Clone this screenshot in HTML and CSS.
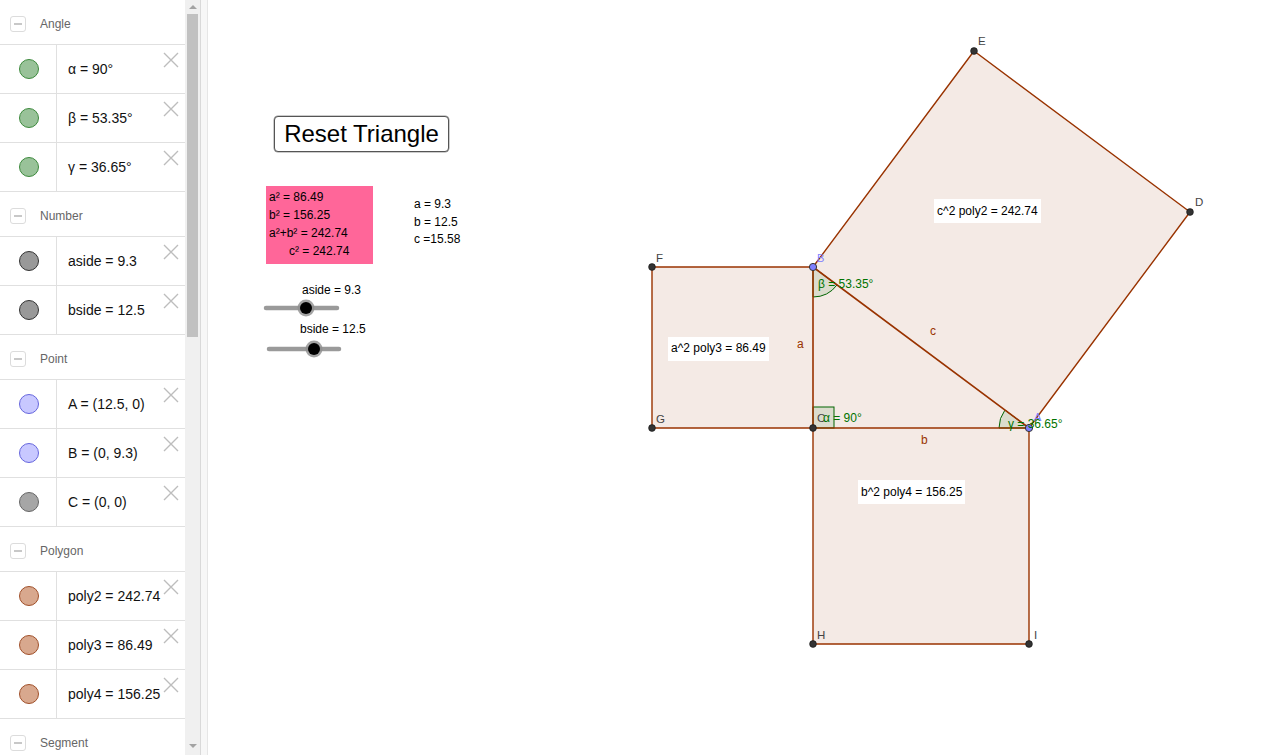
FILE: index.html
```html
<!DOCTYPE html>
<html>
<head>
<meta charset="utf-8">
<title>Pythagoras</title>
<link rel="stylesheet" href="styles.css">
</head>
<body>
<div class="app">
  <aside class="algebra">
    <div class="list">
      <div class="ghead"><span class="toggle"></span><span class="gname">Angle</span></div>
      <div class="item"><div class="mark"><span class="dot dot-angle"></span></div><div class="expr">α = 90°</div><svg class="del" viewBox="0 0 16 16"><path d="M1 1L15 15M15 1L1 15"/></svg></div>
      <div class="item"><div class="mark"><span class="dot dot-angle"></span></div><div class="expr">β = 53.35°</div><svg class="del" viewBox="0 0 16 16"><path d="M1 1L15 15M15 1L1 15"/></svg></div>
      <div class="item"><div class="mark"><span class="dot dot-angle"></span></div><div class="expr">γ = 36.65°</div><svg class="del" viewBox="0 0 16 16"><path d="M1 1L15 15M15 1L1 15"/></svg></div>

      <div class="ghead"><span class="toggle"></span><span class="gname">Number</span></div>
      <div class="item"><div class="mark"><span class="dot dot-num"></span></div><div class="expr">aside = 9.3</div><svg class="del" viewBox="0 0 16 16"><path d="M1 1L15 15M15 1L1 15"/></svg></div>
      <div class="item"><div class="mark"><span class="dot dot-num"></span></div><div class="expr">bside = 12.5</div><svg class="del" viewBox="0 0 16 16"><path d="M1 1L15 15M15 1L1 15"/></svg></div>

      <div class="ghead"><span class="toggle"></span><span class="gname">Point</span></div>
      <div class="item"><div class="mark"><span class="dot dot-free"></span></div><div class="expr">A = (12.5, 0)</div><svg class="del" viewBox="0 0 16 16"><path d="M1 1L15 15M15 1L1 15"/></svg></div>
      <div class="item"><div class="mark"><span class="dot dot-free"></span></div><div class="expr">B = (0, 9.3)</div><svg class="del" viewBox="0 0 16 16"><path d="M1 1L15 15M15 1L1 15"/></svg></div>
      <div class="item"><div class="mark"><span class="dot dot-fixed"></span></div><div class="expr">C = (0, 0)</div><svg class="del" viewBox="0 0 16 16"><path d="M1 1L15 15M15 1L1 15"/></svg></div>

      <div class="ghead"><span class="toggle"></span><span class="gname">Polygon</span></div>
      <div class="item"><div class="mark"><span class="dot dot-poly"></span></div><div class="expr">poly2 = 242.74</div><svg class="del" viewBox="0 0 16 16"><path d="M1 1L15 15M15 1L1 15"/></svg></div>
      <div class="item"><div class="mark"><span class="dot dot-poly"></span></div><div class="expr">poly3 = 86.49</div><svg class="del" viewBox="0 0 16 16"><path d="M1 1L15 15M15 1L1 15"/></svg></div>
      <div class="item"><div class="mark"><span class="dot dot-poly"></span></div><div class="expr">poly4 = 156.25</div><svg class="del" viewBox="0 0 16 16"><path d="M1 1L15 15M15 1L1 15"/></svg></div>

      <div class="ghead"><span class="toggle"></span><span class="gname">Segment</span></div>
    </div>
    <div class="scrollbar">
      <span class="arrow-up"></span>
      <span class="thumb"></span>
      <span class="track-rest"></span>
      <span class="arrow-down"></span>
    </div>
  </aside>
  <div class="divider"></div>
  <main class="canvas">
    <svg class="geo" width="1078" height="755" viewBox="208 0 1078 755">
      <g class="fill">
        <polygon points="813,267 974,51 1190,212 1029,428"/>
        <polygon points="652,267 813,267 813,428 652,428"/>
        <polygon points="813,428 1029,428 1029,644 813,644"/>
        <polygon points="813,267 813,428 1029,428"/>
      </g>
      <g class="angle">
        <path d="M813 267 L813 297 A30 30 0 0 0 837.05 284.93 Z"/>
        <path d="M1029 428 L999 428 A30 30 0 0 1 1004.95 410.07 Z"/>
        <rect x="813" y="407" width="21" height="21"/>
      </g>
      <g class="edge">
        <path d="M813 267 L974 51 L1190 212 L1029 428"/>
        <path d="M813 267 L652 267 L652 428 L813 428"/>
        <path d="M1029 428 L1029 644 L813 644 L813 428"/>
      </g>
      <g class="side">
        <path d="M813 267 L813 428 L1029 428 Z"/>
      </g>
      <g class="pt">
        <circle cx="974" cy="51" r="3.4"/>
        <circle cx="1190" cy="212" r="3.4"/>
        <circle cx="652" cy="267" r="3.4"/>
        <circle cx="652" cy="428" r="3.4"/>
        <circle cx="813" cy="428" r="3.4"/>
        <circle cx="813" cy="644" r="3.4"/>
        <circle cx="1029" cy="644" r="3.4"/>
      </g>
      <g class="pt-free">
        <circle cx="813" cy="267" r="3.6"/>
        <circle cx="1029" cy="428" r="3.6"/>
      </g>
      <g class="plabel">
        <text x="978" y="45">E</text>
        <text x="1195" y="206">D</text>
        <text x="656" y="262">F</text>
        <text x="656" y="423">G</text>
        <text x="817" y="422">C</text>
        <text x="817" y="639">H</text>
        <text x="1034" y="639">I</text>
      </g>
      <g class="plabel-free">
        <text x="817" y="262">B</text>
        <text x="1034" y="421">A</text>
      </g>
      <g class="slabel">
        <text x="797" y="348">a</text>
        <text x="921" y="444">b</text>
        <text x="930" y="335">c</text>
      </g>
      <g class="alabel">
        <text x="818" y="288">β = 53.35°</text>
        <text x="823" y="422">α = 90°</text>
        <text x="1008" y="428">γ = 36.65°</text>
      </g>
      <g class="caption">
        <rect x="934" y="199" width="107" height="24"/>
        <text x="937" y="215">c^2 poly2 = 242.74</text>
        <rect x="668" y="337" width="101" height="24"/>
        <text x="671" y="352">a^2 poly3 = 86.49</text>
        <rect x="858" y="480" width="107" height="24"/>
        <text x="861" y="496">b^2 poly4 = 156.25</text>
      </g>
      <g class="slider">
        <text class="slabel-s" x="302" y="294">aside = 9.3</text>
        <line x1="266" y1="308" x2="337" y2="308"/>
        <circle class="knob-ring" cx="306" cy="308" r="8.5"/>
        <circle class="knob" cx="306" cy="308" r="6"/>
        <text class="slabel-s" x="300" y="333">bside = 12.5</text>
        <line x1="269" y1="349" x2="339" y2="349"/>
        <circle class="knob-ring" cx="314" cy="349" r="8.5"/>
        <circle class="knob" cx="314" cy="349" r="6"/>
      </g>
    </svg>
    <button class="reset">Reset Triangle</button>
    <div class="squares">
      <div>a² = 86.49</div>
      <div>b² = 156.25</div>
      <div>a²+b² = 242.74</div>
      <div class="indent">c² = 242.74</div>
    </div>
    <div class="sides">
      <div>a = 9.3</div>
      <div>b = 12.5</div>
      <div>c =15.58</div>
    </div>
  </main>
</div>
</body>
</html>
```
FILE: styles.css
```css
html, body {
  margin: 0;
  padding: 0;
  width: 1286px;
  height: 755px;
  overflow: hidden;
  background: #fff;
  font-family: "Liberation Sans", Arial, sans-serif;
}

.app {
  display: flex;
  width: 1286px;
  height: 755px;
}

/* ---------- algebra view ---------- */
.algebra {
  display: flex;
  width: 200px;
  height: 755px;
  flex: none;
}

.list {
  width: 185px;
  height: 755px;
  overflow: hidden;
  background: #fff;
}

.ghead {
  display: flex;
  align-items: center;
  height: 44px;
  border-bottom: 1px solid #e0e0e0;
}

.toggle {
  position: relative;
  width: 14px;
  height: 14px;
  margin-left: 10px;
  margin-top: 4px;
  border: 1px solid #dcdcdc;
  border-radius: 3px;
  flex: none;
}

.toggle::after {
  content: "";
  position: absolute;
  left: 3px;
  top: 6px;
  width: 8px;
  height: 2px;
  background: #c8c8c8;
}

.gname {
  margin-left: 14px;
  font-size: 12px;
  color: #666;
  margin-top: 4px;
}

.item {
  display: flex;
  height: 48px;
  border-bottom: 1px solid #e0e0e0;
}

.mark {
  width: 56px;
  flex: none;
  display: flex;
  align-items: center;
  justify-content: center;
  border-right: 1px solid #e0e0e0;
}

.dot {
  width: 18px;
  height: 18px;
  border-radius: 50%;
  border: 1px solid #333;
  margin-left: 1px;
}

.dot-angle { background: #99c299; border-color: #3d8a3d; }
.dot-num   { background: #999999; border-color: #333333; }
.dot-free  { background: #c8c8ff; border-color: #6666dd; }
.dot-fixed { background: #a6a6a6; border-color: #666666; }
.dot-poly  { background: #d8a88e; border-color: #a0502a; }

.expr {
  flex: 1;
  min-width: 0;
  display: flex;
  align-items: center;
  padding-left: 11px;
  font-size: 14px;
  color: #111;
  white-space: nowrap;
}

.del {
  flex: none;
  width: 16px;
  height: 16px;
  margin-top: 7px;
  margin-right: 6px;
  fill: none;
  stroke: #bdbdbd;
  stroke-width: 1.4;
}

/* ---------- scrollbar ---------- */
.scrollbar {
  width: 15px;
  height: 755px;
  flex: none;
  background: #f0f0f0;
  display: flex;
  flex-direction: column;
  align-items: center;
}

.arrow-up {
  width: 0;
  height: 0;
  margin-top: 5px;
  border-left: 4px solid transparent;
  border-right: 4px solid transparent;
  border-bottom: 4px solid #a3a3a3;
}

.thumb {
  width: 11px;
  height: 323px;
  margin-top: 5px;
  background: #c1c1c1;
}

.track-rest {
  flex: 1;
}

.arrow-down {
  width: 0;
  height: 0;
  margin-bottom: 7px;
  border-left: 4px solid transparent;
  border-right: 4px solid transparent;
  border-top: 4px solid #a3a3a3;
}

.divider {
  width: 6px;
  flex: none;
  height: 755px;
  background: #f7f7f7;
  border-left: 1px solid #d9d9d9;
  border-right: 1px solid #e6e6e6;
}

/* ---------- graphics view ---------- */
.canvas {
  position: relative;
  flex: 1;
  height: 755px;
  background: #fff;
  overflow: hidden;
}

.geo {
  display: block;
  font-family: "Liberation Sans", Arial, sans-serif;
}

.fill polygon {
  fill: #f4eae5;
  stroke: none;
}

.angle path, .angle rect {
  fill: rgba(0, 100, 0, 0.1);
  stroke: #006400;
  stroke-width: 1;
}

.edge path {
  fill: none;
  stroke: #993300;
  stroke-width: 1.4;
  stroke-linejoin: round;
}

.side path {
  fill: none;
  stroke: #993300;
  stroke-width: 1.6;
  stroke-linejoin: round;
}

.pt circle {
  fill: #333;
  stroke: #111;
  stroke-width: 0.6;
}

.pt-free circle {
  fill: #7f7fff;
  stroke: #333;
  stroke-width: 1;
}

.plabel text {
  font-size: 11.5px;
  fill: #444;
}

.plabel-free text {
  font-size: 11px;
  fill: #7f7fff;
}

.slabel text {
  font-size: 12px;
  fill: #993300;
}

.alabel text {
  font-size: 12px;
  fill: #007300;
}

.caption rect {
  fill: #fff;
}

.caption text {
  font-size: 12px;
  fill: #000;
}

.slider line {
  stroke: #9a9a9a;
  stroke-width: 4.5;
  stroke-linecap: round;
}

.knob-ring {
  fill: #8d8d8d;
  opacity: 0.8;
}

.knob {
  fill: #000;
}

.slabel-s {
  font-size: 12px;
  fill: #000;
}

.reset {
  position: absolute;
  left: 66px;
  top: 116px;
  width: 175px;
  height: 36px;
  margin: 0;
  padding: 0 0 1px 0;
  background: #fff;
  border: 1px solid #555;
  border-radius: 4px;
  box-shadow: 0 0 0 0.5px #999;
  font-family: "Liberation Sans", Arial, sans-serif;
  font-size: 24px;
  color: #000;
  line-height: 32px;
  text-align: center;
}

.squares {
  position: absolute;
  left: 58px;
  top: 186px;
  width: 104px;
  height: 76px;
  padding: 2px 0 0 3px;
  background: #ff6699;
  font-size: 12px;
  line-height: 18px;
  color: #000;
  white-space: nowrap;
}

.squares .indent {
  padding-left: 20px;
}

.sides {
  position: absolute;
  left: 206px;
  top: 196px;
  font-size: 12px;
  line-height: 17.6px;
  color: #000;
  white-space: nowrap;
}
```
